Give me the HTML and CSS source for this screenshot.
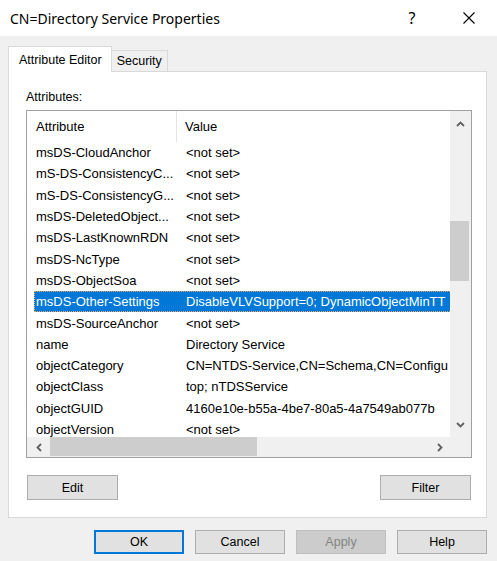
FILE: index.html
```html
<!DOCTYPE html>
<html lang="en">

<head>
  <meta charset="UTF-8">
  <link rel="stylesheet" href="styles.css">
  <title>CN=Directory Service Properties</title>
</head>

<body>
  <div class="titlebar">
    <div class="title">CN=Directory Service Properties</div>
    <div class="controls">
      <div class="ctl help">?</div>
      <div class="ctl">
        <svg width="12" height="12" viewBox="0 0 12 12"><path d="M0.5 0.5L11.5 11.5M11.5 0.5L0.5 11.5" stroke="#000" stroke-width="1.1" fill="none"/></svg>
      </div>
    </div>
  </div>

  <div class="dialog">
    <div class="tabs">
      <div class="tab active">Attribute Editor</div>
      <div class="tab">Security</div>
    </div>

    <div class="panel">
      <div class="label">Attributes:</div>

      <div class="listbox">
        <div class="view">
          <div class="header">
            <div class="hcell first">Attribute</div>
            <div class="hcell">Value</div>
          </div>
          <div class="row"><div class="c1">msDS-CloudAnchor</div><div class="c2">&lt;not set&gt;</div></div>
          <div class="row"><div class="c1">mS-DS-ConsistencyC...</div><div class="c2">&lt;not set&gt;</div></div>
          <div class="row"><div class="c1">mS-DS-ConsistencyG...</div><div class="c2">&lt;not set&gt;</div></div>
          <div class="row"><div class="c1">msDS-DeletedObject...</div><div class="c2">&lt;not set&gt;</div></div>
          <div class="row"><div class="c1">msDS-LastKnownRDN</div><div class="c2">&lt;not set&gt;</div></div>
          <div class="row"><div class="c1">msDS-NcType</div><div class="c2">&lt;not set&gt;</div></div>
          <div class="row"><div class="c1">msDS-ObjectSoa</div><div class="c2">&lt;not set&gt;</div></div>
          <div class="row selected"><div class="c1">msDS-Other-Settings</div><div class="c2">DisableVLVSupport=0; DynamicObjectMinTT</div></div>
          <div class="row"><div class="c1">msDS-SourceAnchor</div><div class="c2">&lt;not set&gt;</div></div>
          <div class="row"><div class="c1">name</div><div class="c2">Directory Service</div></div>
          <div class="row"><div class="c1">objectCategory</div><div class="c2">CN=NTDS-Service,CN=Schema,CN=Configu</div></div>
          <div class="row"><div class="c1">objectClass</div><div class="c2">top; nTDSService</div></div>
          <div class="row"><div class="c1">objectGUID</div><div class="c2">4160e10e-b55a-4be7-80a5-4a7549ab077b</div></div>
          <div class="row"><div class="c1">objectVersion</div><div class="c2">&lt;not set&gt;</div></div>
        </div>

        <!-- vertical scroll bar -->
        <div class="vscroll">
          <div class="arrow up">
            <svg width="9" height="6" viewBox="0 0 9 6"><polyline points="1,5 4.5,1.5 8,5" fill="none" stroke="#606060" stroke-width="1.8"/></svg>
          </div>
          <div class="vtrack"><div class="vthumb"></div></div>
          <div class="arrow down">
            <svg width="9" height="6" viewBox="0 0 9 6"><polyline points="1,1 4.5,4.5 8,1" fill="none" stroke="#606060" stroke-width="1.8"/></svg>
          </div>
        </div>

        <!-- horizontal scroll bar -->
        <div class="hscroll">
          <div class="arrow left">
            <svg width="6" height="9" viewBox="0 0 6 9"><polyline points="5,1 1.5,4.5 5,8" fill="none" stroke="#606060" stroke-width="1.8"/></svg>
          </div>
          <div class="htrack"><div class="hthumb"></div></div>
          <div class="arrow right">
            <svg width="6" height="9" viewBox="0 0 6 9"><polyline points="1,1 4.5,4.5 1,8" fill="none" stroke="#606060" stroke-width="1.8"/></svg>
          </div>
        </div>
        <div class="corner"></div>
      </div>

      <div class="actions">
        <div class="btn">Edit</div>
        <div class="btn">Filter</div>
      </div>
    </div>

    <div class="footer">
      <div class="btn small default">OK</div>
      <div class="btn small">Cancel</div>
      <div class="btn small disabled">Apply</div>
      <div class="btn small">Help</div>
    </div>
  </div>
</body>

</html>
```

FILE: styles.css
```css
body {
  margin: 0;
  width: 497px;
  height: 561px;
  overflow: hidden;
  background: #f0f0f0;
  color: #000;
  font-family: "Liberation Sans", Arial, sans-serif;
  font-size: 12.5px;
}

/* window caption */
.titlebar {
  height: 36px;
  background: #fff;
  display: flex;
  align-items: center;
}

.title {
  padding-left: 10px;
  font-family: "Noto Sans", sans-serif;
  font-size: 14px;
}

.controls {
  margin-left: auto;
  display: flex;
  gap: 11px;
  padding-right: 5px;
}

.ctl {
  width: 46px;
  height: 36px;
  display: flex;
  align-items: center;
  justify-content: center;
}

.help {
  font-family: "Noto Sans", sans-serif;
  font-size: 16px;
}

.dialog {
  padding: 10px 10px 0 8px;
}

/* tabs */
.tabs {
  display: flex;
  align-items: flex-end;
  height: 26px;
  margin-bottom: -1px;
  position: relative;
  z-index: 1;
}

.tab {
  box-sizing: border-box;
  height: 22px;
  padding: 0 5px;
  border: 1px solid #d9d9d9;
  border-left: 0;
  background: #f0f0f0;
  display: flex;
  align-items: center;
}

.tab.active {
  height: 26px;
  padding: 0 9px 0 10px;
  border-left: 1px solid #d9d9d9;
  border-bottom: 0;
  background: #fff;
}

.panel {
  background: #fff;
  border: 1px solid #d9d9d9;
  padding: 18px 14px 17px 17px;
}

.label {
  line-height: 14px;
  margin-bottom: 6px;
}

/* list view */
.listbox {
  box-sizing: border-box;
  height: 348px;
  border: 1px solid #a0a0a0;
  display: grid;
  grid-template-columns: 1fr 21px;
  grid-template-rows: 1fr 20px;
  font-size: 13px;
}

.view {
  overflow: hidden;
  white-space: nowrap;
}

.header {
  display: flex;
  height: 31px;
}

.hcell {
  display: flex;
  align-items: center;
  padding-left: 8px;
}

.hcell.first {
  box-sizing: border-box;
  width: 150px;
  padding-left: 9px;
  border-right: 1px solid #e5e5e5;
}

.row {
  display: flex;
  align-items: center;
  height: 21.3px;
  margin-left: 7px;
  width: 700px;
  box-sizing: border-box;
}

.c1 {
  flex: none;
  box-sizing: border-box;
  width: 143px;
  padding-left: 2px;
}

.c2 {
  padding-left: 9px;
}

.row.selected {
  background: #0078d7;
  color: #fff;
  outline: 1px dotted #f0a868;
  outline-offset: -1px;
}

/* scroll bars */
.vscroll {
  background: #f0f0f0;
  display: flex;
  flex-direction: column;
}

.arrow {
  display: flex;
  align-items: center;
  justify-content: center;
}

.arrow.up {
  height: 26px;
}

.arrow.down {
  height: 25px;
}

.vtrack {
  flex: 1;
}

.vthumb {
  margin-top: 84px;
  width: 19px;
  height: 60px;
  background: #cdcdcd;
}

.hscroll {
  background: #f0f0f0;
  display: flex;
}

.arrow.left {
  width: 23px;
}

.arrow.right {
  width: 21px;
}

.htrack {
  flex: 1;
}

.hthumb {
  width: 207px;
  height: 19px;
  background: #cdcdcd;
}

.corner {
  background: #f0f0f0;
}

/* buttons */
.actions {
  margin-top: 17px;
  padding: 0 1px;
  display: flex;
  justify-content: space-between;
}

.btn {
  box-sizing: border-box;
  width: 91px;
  height: 25px;
  border: 1px solid #adadad;
  background: #e1e1e1;
  display: flex;
  align-items: center;
  justify-content: center;
}

.footer {
  margin-top: 12px;
  display: flex;
  justify-content: flex-end;
  gap: 11px;
}

.btn.small {
  width: 90px;
  height: 24px;
}

.btn.default {
  border: 2px solid #0078d7;
}

.btn.disabled {
  background: #cccccc;
  border-color: #bfbfbf;
  color: #838383;
}
```
